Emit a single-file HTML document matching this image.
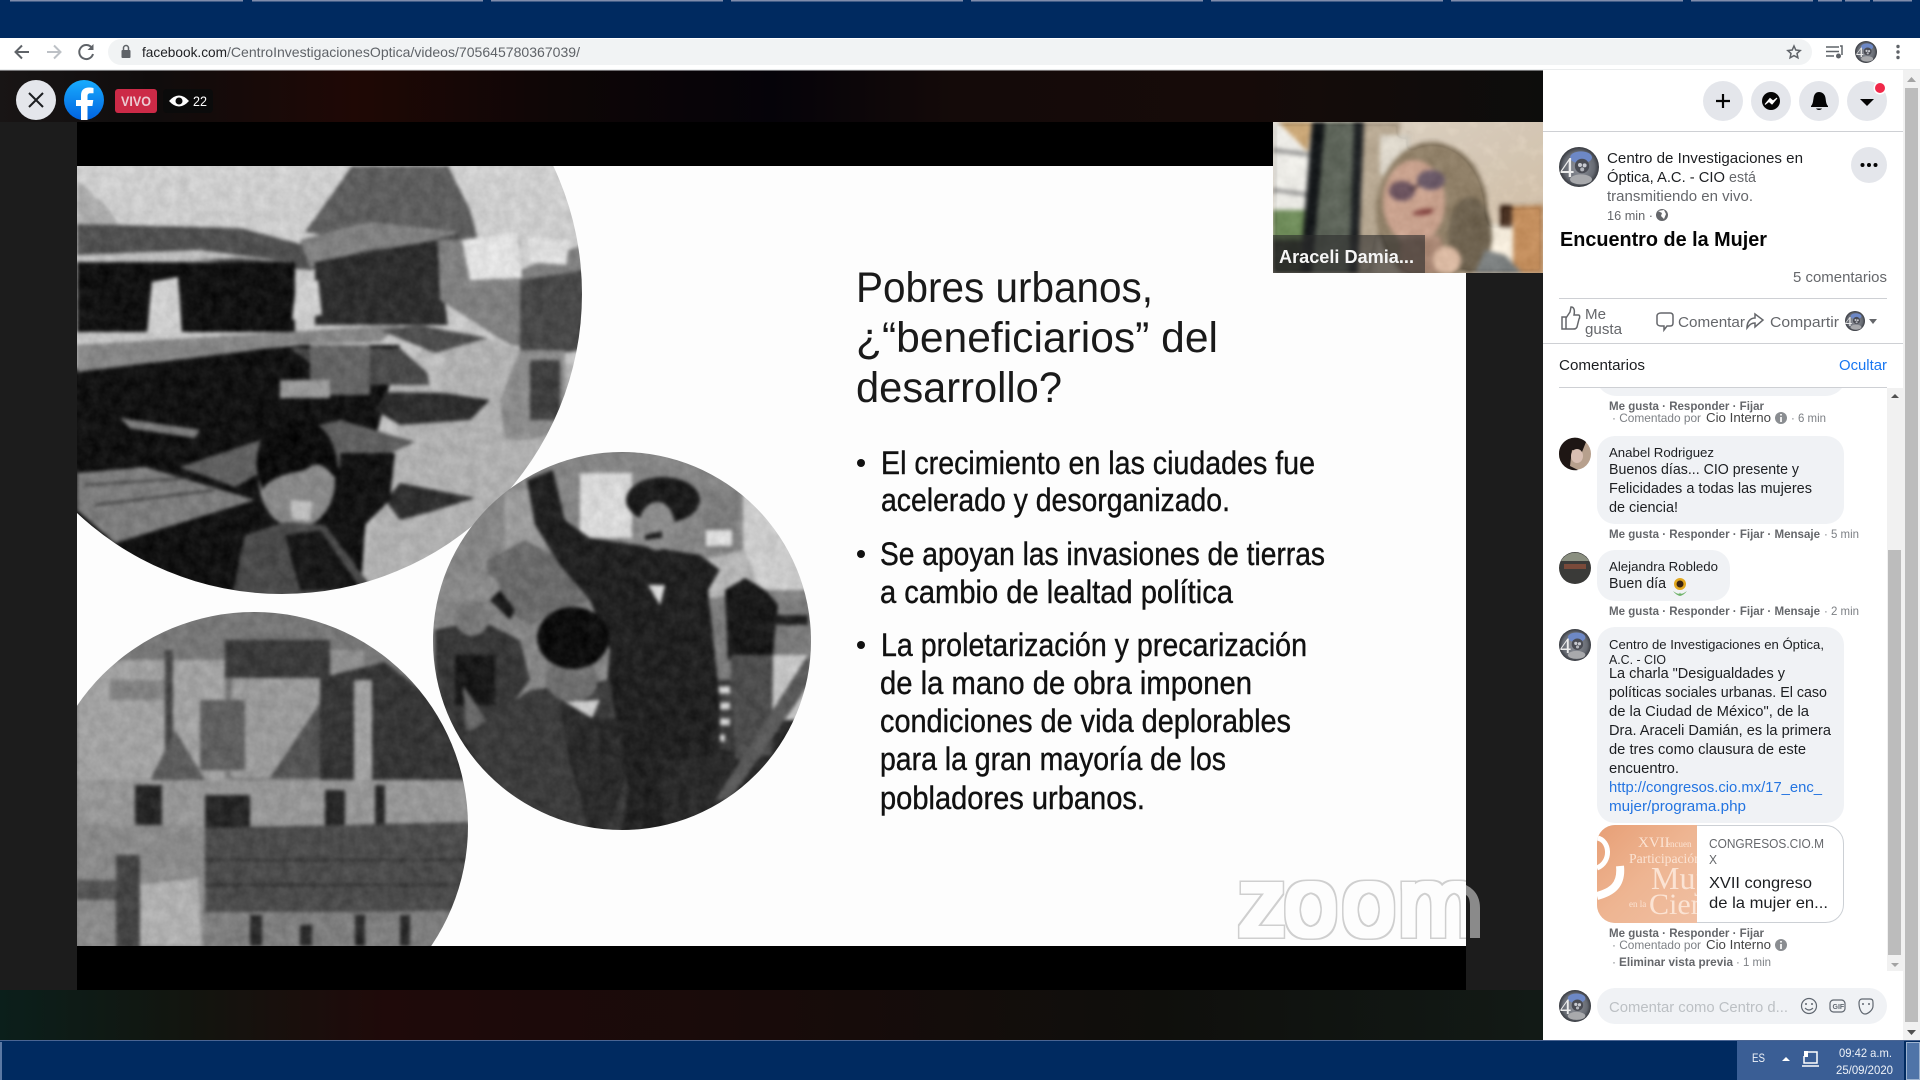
<!DOCTYPE html>
<html lang="es"><head><meta charset="utf-8"><title>Encuentro de la Mujer</title>
<style>
html,body{margin:0;padding:0;background:#fff;width:1920px;height:1080px;overflow:hidden}
svg{display:block}
text{font-family:"Liberation Sans",sans-serif;white-space:pre}
.s{font-family:"Liberation Serif",serif}
.t{font-size:43px;fill:#1a1a1a}
.b{font-size:32.5px;fill:#111;stroke:#111;stroke-width:.4px}
.d{font-size:14.5px;fill:#1c1e21}
.n{font-size:13px;fill:#1c1e21}
.m{font-size:12px;fill:#65676b;font-weight:bold}
.r{font-size:12px;fill:#7d8085}
.g{font-size:14.5px;fill:#65676b}
.w{font-size:12px;fill:#eef2f8}
</style></head><body>
<svg xmlns="http://www.w3.org/2000/svg" width="1920" height="1080" viewBox="0 0 1920 1080">
<defs>
<linearGradient id="tb"><stop offset="0" stop-color="#181515"/><stop offset=".1" stop-color="#100c0c"/><stop offset=".23" stop-color="#1f0805"/><stop offset=".36" stop-color="#0e0606"/><stop offset=".5" stop-color="#050309"/><stop offset=".62" stop-color="#140a09"/><stop offset=".8" stop-color="#160b09"/><stop offset="1" stop-color="#0d0d0c"/></linearGradient>
<linearGradient id="bb"><stop offset="0" stop-color="#0b1f1b"/><stop offset=".12" stop-color="#12150f"/><stop offset=".25" stop-color="#1f0a0a"/><stop offset=".5" stop-color="#180b0a"/><stop offset=".75" stop-color="#0f0f0c"/><stop offset="1" stop-color="#121a16"/></linearGradient>
<linearGradient id="fb" x1="0" y1="0" x2="0" y2="1"><stop offset="0" stop-color="#18acfe"/><stop offset="1" stop-color="#0163e0"/></linearGradient>
<linearGradient id="sky" x1="0" y1="0" x2="0" y2="1"><stop offset="0" stop-color="#cfcfcf"/><stop offset="1" stop-color="#b8b8b8"/></linearGradient>
<linearGradient id="pe" x1="0" y1="0" x2="1" y2="1"><stop offset="0" stop-color="#e79f76"/><stop offset=".5" stop-color="#eeb592"/><stop offset="1" stop-color="#f0bfa2"/></linearGradient>
<linearGradient id="wl" x1="0" y1="0" x2="1" y2="1"><stop offset="0" stop-color="#efe6d8"/><stop offset="1" stop-color="#dcc7ad"/></linearGradient>
<radialGradient id="avg" cx=".5" cy=".5" r=".55"><stop offset="0" stop-color="#94979f"/><stop offset=".7" stop-color="#666a72"/><stop offset="1" stop-color="#23252a"/></radialGradient>
<clipPath id="c1"><circle cx="282" cy="294" r="300"/></clipPath>
<clipPath id="c2"><circle cx="622" cy="641" r="189"/></clipPath>
<clipPath id="c3"><circle cx="254" cy="826" r="214"/></clipPath>
<clipPath id="sl"><rect x="77" y="166" width="1389" height="780"/></clipPath>
<clipPath id="wc"><rect x="1273" y="122" width="270" height="151"/></clipPath>
<clipPath id="ci"><path d="M1697 825V923H1615A18 18 0 0 1 1597 905V843A18 18 0 0 1 1615 825Z"/></clipPath>
<filter id="bl" x="-5%" y="-5%" width="110%" height="110%" color-interpolation-filters="sRGB">
<feGaussianBlur in="SourceGraphic" stdDeviation="1.8" result="b"/>
<feTurbulence type="fractalNoise" baseFrequency=".09" numOctaves="3" seed="3"/>
<feColorMatrix type="matrix" values=".8 0 0 0 0 .8 0 0 0 0 .8 0 0 0 0 0 0 0 0 1" result="n"/>
<feComposite in="b" in2="n" operator="arithmetic" k1="0" k2="1" k3=".15" k4="-.06"/>
</filter>
<filter id="bw" x="-5%" y="-5%" width="110%" height="110%" color-interpolation-filters="sRGB">
<feGaussianBlur in="SourceGraphic" stdDeviation="2.4" result="b"/>
<feTurbulence type="fractalNoise" baseFrequency=".07" numOctaves="3" seed="8"/>
<feColorMatrix type="matrix" values=".8 0 0 0 0 .8 0 0 0 0 .8 0 0 0 0 0 0 0 0 1" result="n"/>
<feComposite in="b" in2="n" operator="arithmetic" k1="0" k2="1" k3=".12" k4="-.048"/>
</filter>
<filter id="zl" x="-5%" y="-10%" width="110%" height="120%" color-interpolation-filters="sRGB">
<feMorphology in="SourceAlpha" operator="dilate" radius="4" result="o"/>
<feFlood flood-color="#cfcfcf"/><feComposite in2="o" operator="in" result="og"/>
<feMorphology in="SourceAlpha" operator="dilate" radius="2.6" result="i"/>
<feFlood flood-color="#fdfdfd"/><feComposite in2="i" operator="in" result="iw"/>
<feMerge><feMergeNode in="og"/><feMergeNode in="iw"/></feMerge>
</filter>
<g id="av"><circle r="1" fill="url(#avg)"/><ellipse cx=".1" cy="-.48" rx=".55" ry=".3" fill="#6d88c6"/><circle cx=".15" cy="-.05" r=".36" fill="#4a4c54"/><circle cx=".05" cy="-.1" r=".1" fill="#c8cad0"/><circle cx=".28" cy="-.08" r=".1" fill="#c8cad0"/><circle cx=".16" cy=".12" r=".1" fill="#b4b6bc"/><ellipse cx=".1" cy=".62" rx=".55" ry=".25" fill="#a8a9ac"/></g>
</defs>

<!-- browser chrome -->
<rect width="1920" height="38" fill="#002a60"/>
<path d="M10 .7H243M252 .7H483M491 .7H723M731 .7H963M971 .7H1203M1211 .7H1443M1451 .7H1683M1691 .7H1813M1818 .7H1842M1845 .7H1870M1873 .7H1912" stroke="#7f8cab" stroke-width="1.500"/>
<rect y="38" width="1920" height="32" fill="#fff"/>
<rect y="69.500" width="1920" height="1" fill="#d6d8db"/>
<path d="M121 39H1799A13 13 0 0 1 1812 52A13 13 0 0 1 1799 65H121A13 13 0 0 1 108 52A13 13 0 0 1 121 39Z" fill="#f1f3f4"/>
<path d="M29 52H16M22 45.500L15.500 52 22 58.500" fill="none" stroke="#5f6368" stroke-width="2"/>
<path d="M47 52H60M54 45.500L60.500 52 54 58.500" fill="none" stroke="#bdc1c6" stroke-width="2"/>
<path d="M92 48A7 7 0 1 0 93 54" fill="none" stroke="#5f6368" stroke-width="2"/><path d="M93.500 44V50H87.500Z" fill="#5f6368"/>
<rect x="121.500" y="50" width="9" height="8" rx="1" fill="#5f6368"/><path d="M123.500 50V48A2.500 2.500 0 0 1 128.500 48V50" fill="none" stroke="#5f6368" stroke-width="1.500"/>
<text x="142" y="57" font-size="14" fill="#202124" textLength="85" lengthAdjust="spacingAndGlyphs">facebook.com</text>
<text x="227" y="57" font-size="14" fill="#5f6368" textLength="353" lengthAdjust="spacingAndGlyphs">/CentroInvestigacionesOptica/videos/705645780367039/</text>
<path d="M1794 46L1795.800 50 1800.200 50.500 1797 53.400 1797.900 57.800 1794 55.600 1790.100 57.800 1791 53.400 1787.800 50.500 1792.200 50Z" fill="none" stroke="#5f6368" stroke-width="1.500"/>
<path d="M1826 47H1839M1826 51.500H1839M1826 56H1834" stroke="#5f6368" stroke-width="1.500"/><path d="M1840 46H1842V55" fill="none" stroke="#5f6368" stroke-width="1.500"/><circle cx="1838.500" cy="56" r="2.500" fill="#5f6368"/>
<g transform="translate(1866 52) scale(11)"><use href="#av"/></g><text class="s" x="1856" y="57" font-size="15" fill="#e8e8e8">4</text>
<circle cx="1898" cy="46.500" r="1.700" fill="#5f6368"/><circle cx="1898" cy="52" r="1.700" fill="#5f6368"/><circle cx="1898" cy="57.500" r="1.700" fill="#5f6368"/>

<!-- video stage -->
<rect y="70.500" width="1543" height="52" fill="url(#tb)"/>
<rect y="990" width="1543" height="51" fill="url(#bb)"/>
<rect y="122" width="77" height="868" fill="#1c1c1c"/>
<rect x="1466" y="122" width="77" height="868" fill="#1c1c1c"/>
<rect x="77" y="122" width="1389" height="868" fill="#000"/>
<rect x="77" y="166" width="1389" height="780" fill="#fdfdfd"/>

<!-- photo 1 -->
<g clip-path="url(#sl)"><g clip-path="url(#c1)"><g filter="url(#bl)">
<rect x="60" y="160" width="530" height="440" fill="url(#sky)"/>
<path d="M305 232L335 190 352 166H448L470 210 478 240 420 250Z" fill="#5e5e5e"/>
<path d="M77 180L105 205 122 228H77Z" fill="#ababab"/>
<path d="M77 224L240 228 300 244 370 224 462 232 450 252 360 262 310 270 200 260 77 262Z" fill="#505050"/>
<path d="M300 240L370 222 460 232 420 245 365 250 310 268Z" fill="#808080"/>
<path d="M77 255L200 250 290 262 240 258 77 264Z" fill="#bdbdbd"/>
<path d="M77 262H295V332H77Z" fill="#121212"/>
<path d="M315 262L436 240 448 325H315Z" fill="#2e2e2e"/>
<path d="M438 240H520V270L582 245V350L510 345 440 300Z" fill="#808080"/>
<path d="M462 240L518 232 522 278 470 280Z" fill="#e2e2e2"/>
<path d="M528 238L570 240 566 265 530 262Z" fill="#dcdcdc"/>
<path d="M520 280L585 270V350L540 355 520 350Z" fill="#484848"/>
<path d="M152 282L178 277 182 333H147Z" fill="#cfcfcf"/>
<path d="M292 320L296 285 318 280 322 315Z" fill="#cdcdcd"/>
<!-- lower darkness -->
<path d="M60 370L300 345H400L370 460 360 600H60Z" fill="#121212"/>
<!-- ground -->
<path d="M430 340L462 330 520 350 590 370 590 620 360 600 375 510 400 440 388 390Z" fill="#b0b0b0"/>
<path d="M385 392L445 393 490 400 470 420 400 425 375 410Z" fill="#2e2e2e"/>
<path d="M400 483L475 498 430 512 400 520 385 500Z" fill="#2f2f2f"/>
<path d="M520 350H565V430L530 440 505 440 500 400Z" fill="#8c8c8c"/>
<path d="M530 360H560V420H530Z" fill="#3e3e3e"/>
<path d="M77 345L400 325 380 342 290 345 240 352 77 372Z" fill="#858585"/>
<path d="M380 330L418 325 488 338 435 353Z" fill="#4f4f4f"/>
<path d="M290 348H400L440 385H340Z" fill="#4a4a4a"/>
<path d="M310 345H370V395H310Z" fill="#646464"/>
<path d="M280 380H330V398H280Z" fill="#9a9a9a"/>
<path d="M425 355H445L440 390H430Z" fill="#bdbdbd"/>
<path d="M120 418L200 430 195 438 130 428Z" fill="#7a7a7a"/>
<path d="M180 467L260 440 340 420 415 442 360 467 310 470 260 473 235 487Z" fill="#5f5f5f"/>
<path d="M340 453H395L390 500 350 540 340 530Z" fill="#141414"/>
<path d="M77 473L145 467 255 500 115 543 77 510Z" fill="#7c7c7c"/>
<path d="M85 485L190 478M95 505L215 490" stroke="#3c3c3c" stroke-width="2"/>
<ellipse cx="297" cy="480" rx="38" ry="48" fill="#888"/>
<path d="M257 470C255 430 275 420 298 420 325 420 340 445 338 480 325 468 320 458 305 470 285 474 270 478 262 490Z" fill="#0d0d0d"/>
<path d="M290 500L312 502 310 520 292 520Z" fill="#bdbdbd"/>
<path d="M232 596L245 535 285 522 325 525 370 585 330 600Z" fill="#4a4a4a"/>
<path d="M285 535L320 530 362 590H300Z" fill="#191919"/>
</g></g>

<!-- photo 3 -->
<g clip-path="url(#c3)"><g filter="url(#bl)">
<rect x="40" y="610" width="440" height="340" fill="#777"/>
<path d="M77 680L110 660H225V780H77Z" fill="#a2a2a2"/>
<path d="M110 680H170V700H110Z" fill="#808080"/>
<rect x="225" y="640" width="105" height="38" fill="#3a3a3a"/>
<rect x="232" y="678" width="100" height="100" fill="#9a9a9a"/>
<rect x="200" y="700" width="45" height="70" fill="#606060"/>
<rect x="330" y="650" width="35" height="50" fill="#8e8e8e"/>
<path d="M270 778L320 703V778Z" fill="#545454"/>
<path d="M320 678L385 662 460 720 470 785H320Z" fill="#363636"/>
<rect x="354" y="680" width="18" height="105" fill="#a0a0a0"/>
<rect x="165" y="650" width="8" height="120" fill="#444"/>
<path d="M150 780L175 730 205 780Z" fill="#5c5c5c"/>
<rect x="77" y="780" width="400" height="48" fill="#969696"/>
<path d="M135 785H162V825H135ZM205 795H250V830H205ZM325 790H345V828H325ZM375 785H385V828H375Z" fill="#272727"/>
<path d="M77 825H205V950H77Z" fill="#8a8a8a"/>
<path d="M77 880H120V900H77Z" fill="#555"/>
<rect x="116" y="855" width="24" height="95" fill="#444"/>
<path d="M140 885L198 878 202 946H140Z" fill="#b0b0b0"/>
<path d="M205 828L470 822V910L205 915Z" fill="#4c4c4c"/>
<path d="M205 860H470M205 885H470" stroke="#363636" stroke-width="3"/>
<rect x="205" y="912" width="260" height="36" fill="#7e7e7e"/>
<path d="M250 915H262V946H250ZM300 925H312V946H300ZM355 915H365V946H355ZM400 915H410V946H400Z" fill="#2c2c2c"/>
</g></g></g>

<!-- photo 2 -->
<g clip-path="url(#c2)"><g filter="url(#bl)">
<rect x="430" y="450" width="385" height="385" fill="#858585"/>
<rect x="430" y="700" width="385" height="135" fill="#2a2a2a"/>
<rect x="580" y="473" width="52" height="65" fill="#d8d8d8"/>
<rect x="743" y="495" width="70" height="95" fill="#cbcbcb"/>
<rect x="703" y="490" width="34" height="60" fill="#7c7c7c"/>
<rect x="706" y="530" width="26" height="16" fill="#dcdcdc"/>
<rect x="505" y="490" width="40" height="60" fill="#9c9c9c"/>
<path d="M487 560L525 540 580 570 590 600 530 625 490 600Z" fill="#6a6a6a"/>
<path d="M700 560L745 550 760 590 700 600Z" fill="#b5b5b5"/>
<path d="M680 600H810V690H680Z" fill="#7a7a7a"/>
<rect x="673" y="680" width="60" height="70" fill="#3e3e3e"/>
<path d="M675 690H730M675 706H730M675 722H730M675 738H725" stroke="#d6d6d6" stroke-width="7"/>
<rect x="772" y="655" width="35" height="65" fill="#c4c4c4"/>
<path d="M527 480L553 470 565 520 590 538 650 547 700 555 720 570 708 590 720 700 720 755 660 760 665 830H595L610 650 590 600 560 565 535 525Z" fill="#212121"/>
<ellipse cx="663" cy="500" rx="37" ry="23" fill="#1b1b1b"/>
<ellipse cx="657" cy="526" rx="18" ry="24" fill="#8c8c8c"/>
<path d="M645 535L662 531 662 538 645 540Z" fill="#222"/>
<path d="M648 585H665L660 605Z" fill="#d8d8d8"/>
<path d="M725 590L745 578 765 590 778 605 773 655 728 660Z" fill="#1a1a1a"/>
<path d="M775 615H808V625H775Z" fill="#222"/>
<path d="M730 655H773L772 755 735 760Z" fill="#4c4c4c"/>
<path d="M808 655L812 680 730 800 715 800Z" fill="#5a5a5a"/>
<path d="M435 630L480 620 520 640 530 680 500 720 460 735 435 720Z" fill="#383838"/>
<ellipse cx="470" cy="588" rx="30" ry="16" fill="#8a8a8a"/>
<path d="M500 590L515 610 510 620 490 600Z" fill="#1a1a1a"/>
<ellipse cx="472" cy="618" rx="17" ry="18" fill="#767676"/>
<rect x="455" y="655" width="40" height="50" fill="#191919"/>
<path d="M463 686L500 740 466 730Z" fill="#676767"/>
<path d="M463 737L530 690 610 680 628 790 620 835H550L490 790Z" fill="#3c3c3c"/>
<path d="M560 700L590 715 620 720 625 780 605 835H590L570 760Z" fill="#2b2b2b"/>
<ellipse cx="572" cy="680" rx="26" ry="22" fill="#6f6f6f"/>
<ellipse cx="573" cy="638" rx="36" ry="31" fill="#0e0e0e"/>
<path d="M565 702L600 700 592 718Z" fill="#c8c8c8"/>
</g></g>

<!-- zoom watermark -->
<g clip-path="url(#sl)"><text x="1238 1284 1342 1398" y="935" font-size="96" filter="url(#zl)" fill="#000">zoom</text></g>
<path d="M1466 885Q1480 892 1480 908V938H1470V906Q1470 897 1466 895Z" fill="#8a8a8a"/>

<!-- slide text -->
<text class="t" x="856" y="302" textLength="297" lengthAdjust="spacingAndGlyphs">Pobres urbanos,</text>
<text class="t" x="856" y="352" textLength="362" lengthAdjust="spacingAndGlyphs">¿“beneficiarios” del</text>
<text class="t" x="856" y="402" textLength="206" lengthAdjust="spacingAndGlyphs">desarrollo?</text>
<circle cx="861" cy="463" r="4" fill="#111"/><circle cx="861" cy="554" r="4" fill="#111"/><circle cx="861" cy="645" r="4" fill="#111"/>
<text class="b" x="881" y="474" textLength="434" lengthAdjust="spacingAndGlyphs">El crecimiento en las ciudades fue</text>
<text class="b" x="881" y="511" textLength="349" lengthAdjust="spacingAndGlyphs">acelerado y desorganizado.</text>
<text class="b" x="880" y="565" textLength="445" lengthAdjust="spacingAndGlyphs">Se apoyan las invasiones de tierras</text>
<text class="b" x="880" y="603" textLength="353" lengthAdjust="spacingAndGlyphs">a cambio de lealtad política</text>
<text class="b" x="881" y="656" textLength="426" lengthAdjust="spacingAndGlyphs">La proletarización y precarización</text>
<text class="b" x="880" y="694" textLength="372" lengthAdjust="spacingAndGlyphs">de la mano de obra imponen</text>
<text class="b" x="880" y="732" textLength="411" lengthAdjust="spacingAndGlyphs">condiciones de vida deplorables</text>
<text class="b" x="880" y="770" textLength="346" lengthAdjust="spacingAndGlyphs">para la gran mayoría de los</text>
<text class="b" x="880" y="809" textLength="265" lengthAdjust="spacingAndGlyphs">pobladores urbanos.</text>

<!-- webcam -->
<g clip-path="url(#wc)">
<rect x="1273" y="122" width="270" height="151" fill="url(#wl)"/>
<g filter="url(#bw)">
<rect x="1273" y="122" width="45" height="151" fill="#ecebe6"/>
<path d="M1278 122H1312L1308 152Z" fill="#c9a676"/>
<path d="M1273 150L1312 155M1273 190L1310 195" stroke="#777" stroke-width="3"/>
<rect x="1273" y="210" width="35" height="32" fill="#6d8a58"/><rect x="1273" y="240" width="30" height="33" fill="#2e3428"/>
<path d="M1322 122H1360L1352 273H1312Z" fill="#5d6459"/>
<path d="M1312 122H1325L1312 273H1300Z" fill="#15181a"/>
<path d="M1354 122H1364L1358 273H1349Z" fill="#1f2224"/>
<path d="M1364 122H1400V150L1385 200 1372 273H1358Z" fill="#b7a892"/>
<rect x="1380" y="135" width="30" height="40" fill="#ded8cc"/>
<path d="M1500 207L1543 205V273H1500Z" fill="#c48f5e"/>
<rect x="1485" y="224" width="28" height="45" fill="#f4ebdb"/>
<rect x="1500" y="205" width="12" height="22" fill="#4b3324"/>
<ellipse cx="1432" cy="212" rx="56" ry="70" fill="#8f7f67"/>
<ellipse cx="1470" cy="235" rx="22" ry="38" fill="#6f6350"/>
<path d="M1475 273L1485 250 1505 255 1522 273Z" fill="#7c8080"/>
<ellipse cx="1414" cy="202" rx="31" ry="42" fill="#c9a28e"/>
<path d="M1400 240L1440 235 1450 273H1400Z" fill="#a88673"/>
<ellipse cx="1402" cy="191" rx="13" ry="10" fill="#6d5560"/>
<ellipse cx="1431" cy="180" rx="14" ry="10" fill="#6b5a68"/>
<path d="M1410 190L1420 184" stroke="#3c2a35" stroke-width="2"/>
<path d="M1411 214Q1423 206 1435 210 1428 218 1411 214Z" fill="#7f3f3c"/>
<ellipse cx="1447" cy="260" rx="14" ry="14" fill="#dab9a2"/>
</g>
<rect x="1273" y="235" width="152" height="38" fill="#2b2b2b" fill-opacity=".6"/>
<text x="1279" y="263" font-size="18" font-weight="bold" fill="#f5f5f5" textLength="135" lengthAdjust="spacingAndGlyphs">Araceli Damia...</text>
</g>

<!-- top overlay buttons -->
<circle cx="36" cy="100" r="20" fill="#e4e6eb"/><path d="M29 93L43 107M43 93L29 107" stroke="#1c1e21" stroke-width="2"/>
<circle cx="84" cy="100" r="20" fill="url(#fb)"/><path d="M81 120V106H76V100H81V95.500C81 90 84 87.500 89 87.500 91 87.500 93 87.800 93.500 88V93.200H90.500C88 93.200 87.500 94.500 87.500 96.200V100H93.300L92.400 106H87.500V120Z" fill="#fff"/>
<rect x="115" y="89" width="42" height="24" rx="3" fill="#cc2a47"/>
<text x="121" y="106" font-size="14" font-weight="bold" fill="#eccbd3" textLength="30" lengthAdjust="spacingAndGlyphs">VIVO</text>
<rect x="163" y="89" width="50" height="24" rx="4" fill="#0b0b0b"/>
<path d="M169 101Q179 90 189 101 179 112 169 101Z" fill="#fff"/><circle cx="179" cy="101" r="3.500" fill="#0b0b0b"/>
<text x="193" y="106" font-size="14" fill="#fff" textLength="14" lengthAdjust="spacingAndGlyphs">22</text>

<!-- right panel -->
<rect x="1543" y="70" width="360" height="971" fill="#fff"/>
<rect x="1903" y="70" width="17" height="971" fill="#f1f1f1"/>
<rect x="1905" y="88" width="13" height="934" fill="#bcbcbc"/>
<path d="M1911.500 77L1916 82H1907Z" fill="#a3a3a3"/><path d="M1911.500 1035L1916 1030H1907Z" fill="#505050"/>

<circle cx="1723" cy="101" r="20" fill="#e4e6eb"/><path d="M1723 94V108M1716 101H1730" stroke="#050505" stroke-width="2.200"/>
<circle cx="1771" cy="101" r="20" fill="#e4e6eb"/><circle cx="1771" cy="101" r="9" fill="#050505"/><path d="M1765 104.500L1770 98.500 1773 101 1777 98 1772 104 1769 101.500Z" fill="#fff" stroke="#fff"/>
<circle cx="1819" cy="101" r="20" fill="#e4e6eb"/><path d="M1811 106C1813 104 1813 101 1813.500 98.500 1814 94 1816 92 1819 92 1822 92 1825 94 1825.500 98 1826 101 1826 104 1828 106V107H1811ZM1816 108.500H1822C1821 110.500 1817 110.500 1816 108.500Z" fill="#050505"/>
<circle cx="1867" cy="101" r="20" fill="#e4e6eb"/><path d="M1860 99H1874L1867 106Z" fill="#050505"/>
<circle cx="1880" cy="88" r="6.500" fill="#fff"/><circle cx="1880" cy="88" r="5" fill="#f02849"/>
<rect x="1543" y="131" width="360" height="1" fill="#ced0d4"/>

<g transform="translate(1579 167) scale(20)"><use href="#av"/></g><text class="s" x="1560" y="177" font-size="28" fill="#ececec">4</text>
<text class="d" x="1607" y="163" textLength="196" lengthAdjust="spacingAndGlyphs">Centro de Investigaciones en</text>
<text class="d" x="1607" y="182" textLength="118" lengthAdjust="spacingAndGlyphs">Óptica, A.C. - CIO</text>
<text class="g" x="1729" y="182" textLength="27" lengthAdjust="spacingAndGlyphs">está</text>
<text class="g" x="1607" y="201" textLength="146" lengthAdjust="spacingAndGlyphs">transmitiendo en vivo.</text>
<text x="1607" y="220" font-size="13" fill="#65676b" textLength="46" lengthAdjust="spacingAndGlyphs">16 min ·</text>
<circle cx="1662" cy="215" r="6" fill="#65676b"/><path d="M1658 211L1662 213 1661 216 1664 219 1666 214 1664 210Z" fill="#fff"/>
<circle cx="1869" cy="165" r="18" fill="#e4e6eb"/><circle cx="1862.500" cy="165" r="2" fill="#050505"/><circle cx="1869" cy="165" r="2" fill="#050505"/><circle cx="1875.500" cy="165" r="2" fill="#050505"/>
<text x="1560" y="246" font-size="20" font-weight="bold" fill="#050505" textLength="207" lengthAdjust="spacingAndGlyphs">Encuentro de la Mujer</text>
<text class="g" x="1793" y="282" textLength="94" lengthAdjust="spacingAndGlyphs">5 comentarios</text>
<rect x="1559" y="298" width="328" height="1" fill="#ced0d4"/>
<path d="M1562 317H1566V329H1562ZM1566 318L1570 312 1571 307C1574 307 1575 310 1574 315H1578.500C1580 315 1580 318 1579 319L1577 327C1576 329 1575 329 1573 329H1566" fill="none" stroke="#65676b" stroke-width="1.500"/>
<text class="g" x="1585" y="319" textLength="21" lengthAdjust="spacingAndGlyphs">Me</text>
<text class="g" x="1585" y="334" textLength="37" lengthAdjust="spacingAndGlyphs">gusta</text>
<path d="M1660 314H1669C1671 314 1672 315 1672 317V324C1672 326 1671 327 1669 327H1666L1663 331V327H1660C1658 327 1656 326 1656 324V317C1656 315 1658 314 1660 314Z" transform="translate(1 -1)" fill="none" stroke="#65676b" stroke-width="1.500"/>
<text class="g" x="1678" y="327" textLength="67" lengthAdjust="spacingAndGlyphs">Comentar</text>
<path d="M1755 314V318C1750 318 1747 322 1747 328 1750 324 1752 323 1755 323V327L1763 320Z" fill="none" stroke="#65676b" stroke-width="1.500"/>
<text class="g" x="1770" y="327" textLength="69" lengthAdjust="spacingAndGlyphs">Compartir</text>
<g transform="translate(1855 321) scale(10)"><use href="#av"/></g><text class="s" x="1845" y="326" font-size="14" fill="#ececec">4</text>
<path d="M1869 319H1877L1873 324Z" fill="#65676b"/>
<rect x="1543" y="343" width="360" height="1" fill="#ced0d4"/>
<text class="d" x="1559" y="370" textLength="86" lengthAdjust="spacingAndGlyphs">Comentarios</text>
<text class="d" style="fill:#1877f2" x="1839" y="370" textLength="48" lengthAdjust="spacingAndGlyphs">Ocultar</text>
<rect x="1559" y="387" width="328" height="1" fill="#ced0d4"/>

<!-- inner scrollbar -->
<rect x="1887" y="388" width="16" height="583" fill="#f1f1f1"/>
<rect x="1888" y="550" width="13" height="405" fill="#bcbcbc"/>
<path d="M1895 394L1899 398H1891Z" fill="#505050"/><path d="M1895 967L1899 963H1891Z" fill="#a3a3a3"/>

<!-- previous bubble tail -->
<path d="M1600 388H1842C1838 393 1832 396 1825 396H1617C1610 396 1604 393 1600 388Z" fill="#f0f2f5"/>
<text class="m" x="1609" y="410" textLength="155" lengthAdjust="spacingAndGlyphs">Me gusta · Responder · Fijar</text>
<text class="r" x="1612" y="422" textLength="89" lengthAdjust="spacingAndGlyphs">· Comentado por</text>
<text class="n" style="fill:#444" x="1706" y="422" textLength="65" lengthAdjust="spacingAndGlyphs">Cio Interno</text>
<circle cx="1781" cy="418" r="6" fill="#8a8d91"/><path d="M1781 417V422M1781 414V415.500" stroke="#fff" stroke-width="1.700"/>
<text class="r" x="1791" y="422" textLength="35" lengthAdjust="spacingAndGlyphs">· 6 min</text>

<!-- Anabel -->
<circle cx="1575" cy="454" r="16" fill="#b7a08d"/><path d="M1559 454A16 16 0 0 1 1586 442L1582 452 1572 450 1570 466 1578 470A16 16 0 0 1 1559 454Z" fill="#1e1614"/><ellipse cx="1577" cy="456" rx="6" ry="7" fill="#d9bfb3"/>
<rect x="1597" y="436" width="247" height="88" rx="18" fill="#f0f2f5"/>
<text class="n" x="1609" y="457" textLength="105" lengthAdjust="spacingAndGlyphs">Anabel Rodriguez</text>
<text class="d" x="1609" y="474" textLength="190" lengthAdjust="spacingAndGlyphs">Buenos días... CIO presente y</text>
<text class="d" x="1609" y="493" textLength="203" lengthAdjust="spacingAndGlyphs">Felicidades a todas las mujeres</text>
<text class="d" x="1609" y="512" textLength="69" lengthAdjust="spacingAndGlyphs">de ciencia!</text>
<text class="m" x="1609" y="538" textLength="211" lengthAdjust="spacingAndGlyphs">Me gusta · Responder · Fijar · Mensaje</text>
<text class="r" x="1824" y="538" textLength="35" lengthAdjust="spacingAndGlyphs">· 5 min</text>

<!-- Alejandra -->
<circle cx="1575" cy="568" r="16" fill="#3a3a38"/><path d="M1561 561A16 16 0 0 1 1589 561Z" fill="#8a8f80"/><path d="M1564 564H1586V569H1564Z" fill="#7a4a3a"/>
<rect x="1597" y="550" width="133" height="51" rx="18" fill="#f0f2f5"/>
<text class="n" x="1609" y="571" textLength="109" lengthAdjust="spacingAndGlyphs">Alejandra Robledo</text>
<text class="d" x="1609" y="588" textLength="57" lengthAdjust="spacingAndGlyphs">Buen día</text>
<path d="M1673 591Q1680 596 1680 592 1680 596 1687 591 1684 595 1680 596 1676 595 1673 591Z" fill="#6fb36a"/>
<circle cx="1680" cy="584" r="6" fill="#e2a81f"/><circle cx="1680" cy="584" r="3.500" fill="#3a2410"/>
<text class="m" x="1609" y="615" textLength="211" lengthAdjust="spacingAndGlyphs">Me gusta · Responder · Fijar · Mensaje</text>
<text class="r" x="1824" y="615" textLength="35" lengthAdjust="spacingAndGlyphs">· 2 min</text>

<!-- CIO comment -->
<g transform="translate(1575 645) scale(16)"><use href="#av"/></g><text class="s" x="1560" y="653" font-size="22" fill="#ececec">4</text>
<rect x="1597" y="627" width="247" height="196" rx="18" fill="#f0f2f5"/>
<text class="n" x="1609" y="649" textLength="215" lengthAdjust="spacingAndGlyphs">Centro de Investigaciones en Óptica,</text>
<text class="n" x="1609" y="664" textLength="57" lengthAdjust="spacingAndGlyphs">A.C. - CIO</text>
<text class="d" x="1609" y="678" textLength="176" lengthAdjust="spacingAndGlyphs">La charla "Desigualdades y</text>
<text class="d" x="1609" y="697" textLength="218" lengthAdjust="spacingAndGlyphs">políticas sociales urbanas. El caso</text>
<text class="d" x="1609" y="716" textLength="200" lengthAdjust="spacingAndGlyphs">de la Ciudad de México", de la</text>
<text class="d" x="1609" y="735" textLength="222" lengthAdjust="spacingAndGlyphs">Dra. Araceli Damián, es la primera</text>
<text class="d" x="1609" y="754" textLength="197" lengthAdjust="spacingAndGlyphs">de tres como clausura de este</text>
<text class="d" x="1609" y="773" textLength="70" lengthAdjust="spacingAndGlyphs">encuentro.</text>
<text class="d" style="fill:#2374e1" x="1609" y="792" textLength="213" lengthAdjust="spacingAndGlyphs">http://congresos.cio.mx/17_enc_</text>
<text class="d" style="fill:#2374e1" x="1609" y="811" textLength="137" lengthAdjust="spacingAndGlyphs">mujer/programa.php</text>

<!-- link card -->
<rect x="1597.500" y="825.500" width="246" height="97" rx="18" fill="#fff" stroke="#ccd0d5"/>
<g clip-path="url(#ci)">
<rect x="1597" y="825" width="100" height="98" fill="url(#pe)"/>
<path d="M1597 838C1610 840 1612 862 1597 868" fill="none" stroke="#fff" stroke-width="5"/>
<path d="M1620 866C1622 885 1612 892 1597 896" fill="none" stroke="#fff" stroke-width="8"/>
<g fill="#fbe3d3">
<text class="s" x="1638" y="847" font-size="15">XVII</text><text class="s" x="1666" y="847" font-size="9">encuen</text>
<text class="s" x="1629" y="863" font-size="14" textLength="72" lengthAdjust="spacingAndGlyphs">Participación</text>
<text class="s" x="1651" y="889" font-size="32">Mujer</text>
<text class="s" x="1629" y="907" font-size="9">en la</text>
<text class="s" x="1649" y="914" font-size="30">Ciencia</text>
</g></g>
<text class="n" style="fill:#65676b" x="1709" y="848" textLength="115" lengthAdjust="spacingAndGlyphs">CONGRESOS.CIO.M</text>
<text class="n" style="fill:#65676b" x="1709" y="864" textLength="8" lengthAdjust="spacingAndGlyphs">X</text>
<text x="1709" y="888" font-size="16" fill="#1c1e21" textLength="103" lengthAdjust="spacingAndGlyphs">XVII congreso</text>
<text x="1709" y="908" font-size="16" fill="#1c1e21" textLength="119" lengthAdjust="spacingAndGlyphs">de la mujer en...</text>

<text class="m" x="1609" y="937" textLength="155" lengthAdjust="spacingAndGlyphs">Me gusta · Responder · Fijar</text>
<text class="r" x="1612" y="949" textLength="89" lengthAdjust="spacingAndGlyphs">· Comentado por</text>
<text class="n" style="fill:#444" x="1706" y="949" textLength="65" lengthAdjust="spacingAndGlyphs">Cio Interno</text>
<circle cx="1781" cy="945" r="6" fill="#8a8d91"/><path d="M1781 944V949M1781 941V942.500" stroke="#fff" stroke-width="1.700"/>
<text class="r" x="1612" y="966">·</text>
<text class="m" x="1619" y="966" textLength="114" lengthAdjust="spacingAndGlyphs">Eliminar vista previa</text>
<text class="r" x="1736" y="966" textLength="35" lengthAdjust="spacingAndGlyphs">· 1 min</text>

<!-- compose -->
<g transform="translate(1575 1006) scale(16)"><use href="#av"/></g><text class="s" x="1560" y="1014" font-size="22" fill="#ececec">4</text>
<rect x="1597" y="988" width="290" height="36" rx="18" fill="#f0f2f5"/>
<text x="1609" y="1012" font-size="15" fill="#bcc0c4" textLength="179" lengthAdjust="spacingAndGlyphs">Comentar como Centro d...</text>
<circle cx="1809" cy="1006" r="7.500" fill="none" stroke="#606770" stroke-width="1.200"/><circle cx="1806" cy="1004" r="1" fill="#606770"/><circle cx="1812" cy="1004" r="1" fill="#606770"/><path d="M1805 1008Q1809 1012 1813 1008" fill="none" stroke="#606770" stroke-width="1.200"/>
<rect x="1830" y="1000" width="15" height="12" rx="3.500" fill="none" stroke="#606770" stroke-width="1.200"/><text x="1832.500" y="1009" font-size="7" font-weight="bold" fill="#606770">GIF</text>
<path d="M1862 999H1870C1873 999 1873 1001 1873 1003V1006C1873 1010 1868 1014 1865 1014 1861 1014 1859 1008 1859 1003 1859 1001 1860 999 1862 999Z" fill="none" stroke="#606770" stroke-width="1.200"/><circle cx="1863" cy="1004" r="1" fill="#606770"/><circle cx="1869" cy="1004" r="1" fill="#606770"/>

<!-- taskbar -->
<rect y="1040" width="1920" height="40" fill="#002a60"/>
<rect y="1040" width="1920" height="1" fill="#4a6593"/>
<rect x="0" y="1042" width="2" height="38" fill="#5b78a3"/>
<rect x="1737" y="1041" width="167" height="39" fill="#3a5e95"/>
<rect x="1906.500" y="1042.500" width="13" height="37" fill="#4f74a8" stroke="#9db3d0"/>
<text class="w" x="1752" y="1062" textLength="13" lengthAdjust="spacingAndGlyphs">ES</text>
<path d="M1786 1057L1790 1061H1782Z" fill="#fff"/>
<path d="M1804 1052H1817V1063H1804V1056M1802 1066H1819" fill="none" stroke="#fff" stroke-width="1.500"/><rect x="1804" y="1051" width="4" height="6" fill="#fff"/>
<text class="w" x="1839" y="1057" textLength="53" lengthAdjust="spacingAndGlyphs">09:42 a.m.</text>
<text class="w" x="1836" y="1074" textLength="57" lengthAdjust="spacingAndGlyphs">25/09/2020</text>
</svg>
</body></html>
